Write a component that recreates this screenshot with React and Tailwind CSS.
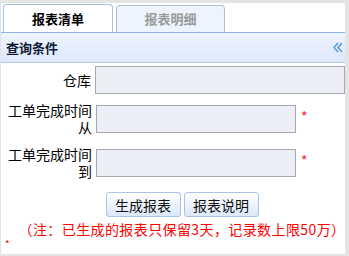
import React from 'react';

const cjk = { fontFamily: '"Noto Sans CJK SC", "Noto Sans", sans-serif' };

function Field({ wide, star }) {
  return (
    <div className="flex items-center">
      <div
        className={
          (wide ? 'w-[250px]' : 'w-[200px]') +
          ' h-[28px] border border-[#a9a9a9] bg-[#ebedf7]'
        }
      />
      {star && <span className="ml-[5px] -mt-[7px] text-[14px] leading-none text-[#ff1a1a]">*</span>}
    </div>
  );
}

export default function App() {
  return (
    <div className="w-[349px] h-[256px] bg-[#e4e4e4] pt-[3px] pr-[4px] pl-[1px] pb-[2px]" style={cjk}>
      <div className="h-full bg-white flex flex-col">
        {/* tabs */}
        <div className="flex items-end gap-[3px] pl-[2px] h-[29px]">
          <div className="w-[110px] h-[28px] rounded-t-[4px] border border-b-0 border-[#a3c0e8] bg-white flex items-center justify-center text-[13px] font-bold text-black">
            报表清单
          </div>
          <div className="w-[109px] h-[27px] rounded-t-[4px] border border-b-0 border-[#b9bcc6] bg-[#eef4fd] flex items-center justify-center text-[13px] font-bold text-[#9a9a9a]">
            报表明细
          </div>
        </div>

        {/* panel header */}
        <div className="h-[31px] border-t border-[#8fb3e4] border-b border-b-[#b3cbee] bg-gradient-to-b from-[#eef4fe] to-[#dde8fb] flex items-center justify-between pl-[5px] pr-[2px]">
          <span className="text-[13px] font-bold text-[#0e1a33]">查询条件</span>
          <svg width="10" height="11" viewBox="0 0 10 11" fill="none" stroke="#5b9be2" strokeWidth="1.6">
            <polyline points="5,1 1,5.5 5,10" />
            <polyline points="9,1 5,5.5 9,10" />
          </svg>
        </div>

        {/* form */}
        <div className="flex flex-col text-[14px] leading-[17px] text-black">
          <div className="flex items-center gap-[4px] mt-[3px]">
            <div className="w-[91px] text-right">仓库</div>
            <Field wide />
          </div>
          <div className="flex items-center gap-[4px] mt-[8px]">
            <div className="w-[91px] text-right">工单完成时间从</div>
            <Field star />
          </div>
          <div className="flex items-center gap-[4px] mt-[10px]">
            <div className="w-[91px] text-right">工单完成时间到</div>
            <Field star />
          </div>

          <div className="flex justify-center gap-[3px] pl-[18px] mt-[12px]">
            <button className="w-[75px] h-[25px] rounded-[3px] border border-[#a8c4ea] bg-gradient-to-b from-white to-[#dbe7f8] text-[14px] text-[#111] leading-none">
              生成报表
            </button>
            <button className="w-[75px] h-[25px] rounded-[3px] border border-[#a8c4ea] bg-gradient-to-b from-white to-[#dbe7f8] text-[14px] text-[#111] leading-none">
              报表说明
            </button>
          </div>

          <div className="flex justify-center pl-[18px] mt-[3px] text-[14px] tracking-[0.4px] leading-[18px] text-[#ff0000] whitespace-nowrap">
            （注：已生成的报表只保留3天，记录数上限50万）
          </div>
          <div className="pl-[4px] text-[10px] leading-[12px] text-[#ff0000]">*</div>
        </div>
      </div>
    </div>
  );
}
